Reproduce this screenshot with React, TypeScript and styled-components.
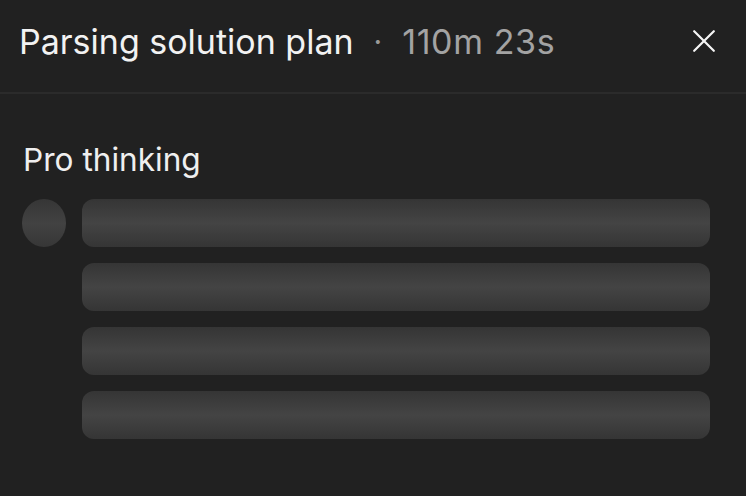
import React from "react";
import styled, { createGlobalStyle } from "styled-components";

const Global = createGlobalStyle`
  html, body { margin: 0; padding: 0; background: #212121; }
  body { font-family: "Inter", "Noto Sans", sans-serif; -webkit-font-smoothing: antialiased; }
`;

const Panel = styled.div`
  width: 746px;
  height: 496px;
  background: #212121;
  display: flex;
  flex-direction: column;
  overflow: hidden;
`;

const Header = styled.header`
  height: 94px;
  box-sizing: border-box;
  border-bottom: 2px solid #2b2b2b;
  display: flex;
  align-items: flex-start;
  padding: 21px 31px 0 19px;
  gap: 20px;
`;

const Title = styled.h1`
  margin: 0;
  font-size: 34px;
  line-height: 41px;
  font-weight: 400;
  color: #f2f2f2;
  white-space: nowrap;
`;

const Dot = styled.span`
  font-size: 30px;
  line-height: 41px;
  color: #9a9a9a;
`;

const Timer = styled.span`
  font-size: 34px;
  line-height: 41px;
  color: #a3a3a3;
  letter-spacing: 0.6px;
  flex: 1;
  white-space: nowrap;
`;

const CloseButton = styled.button`
  background: none;
  border: 0;
  padding: 0;
  margin-top: 9px;
  width: 22px;
  height: 22px;
  display: flex;
  cursor: pointer;
`;

const Body = styled.section`
  padding: 47px 36px 0 22px;
  display: flex;
  flex-direction: column;
  gap: 20px;
`;

const SectionTitle = styled.h2`
  margin: 0;
  padding-left: 1px;
  font-size: 31.6px;
  line-height: 38px;
  font-weight: 400;
  color: #efefef;
`;

const Row = styled.div`
  display: flex;
  gap: 16px;
  align-items: flex-start;
`;

const Avatar = styled.div`
  width: 44px;
  height: 48px;
  border-radius: 50%;
  flex: none;
  background: linear-gradient(180deg, #363636 0%, #424242 50%, #363636 100%);
`;

const Lines = styled.div`
  flex: 1;
  display: flex;
  flex-direction: column;
  gap: 16px;
`;

const Line = styled.div`
  height: 48px;
  border-radius: 12px;
  background: linear-gradient(180deg, #353535 0%, #444444 50%, #353535 100%);
`;

export default function App() {
  return (
    <>
      <Global />
      <Panel>
        <Header>
          <Title>Parsing solution plan</Title>
          <Dot>·</Dot>
          <Timer>110m 23s</Timer>
          <CloseButton aria-label="Close">
            <svg width="22" height="22" viewBox="0 0 22 22" fill="none">
              <path d="M1.2 1.2L20.8 20.8M20.8 1.2L1.2 20.8" stroke="#f5f5f5" strokeWidth="2.2" strokeLinecap="round" />
            </svg>
          </CloseButton>
        </Header>
        <Body>
          <SectionTitle>Pro thinking</SectionTitle>
          <Row>
            <Avatar />
            <Lines>
              <Line />
              <Line />
              <Line />
              <Line />
            </Lines>
          </Row>
        </Body>
      </Panel>
    </>
  );
}
